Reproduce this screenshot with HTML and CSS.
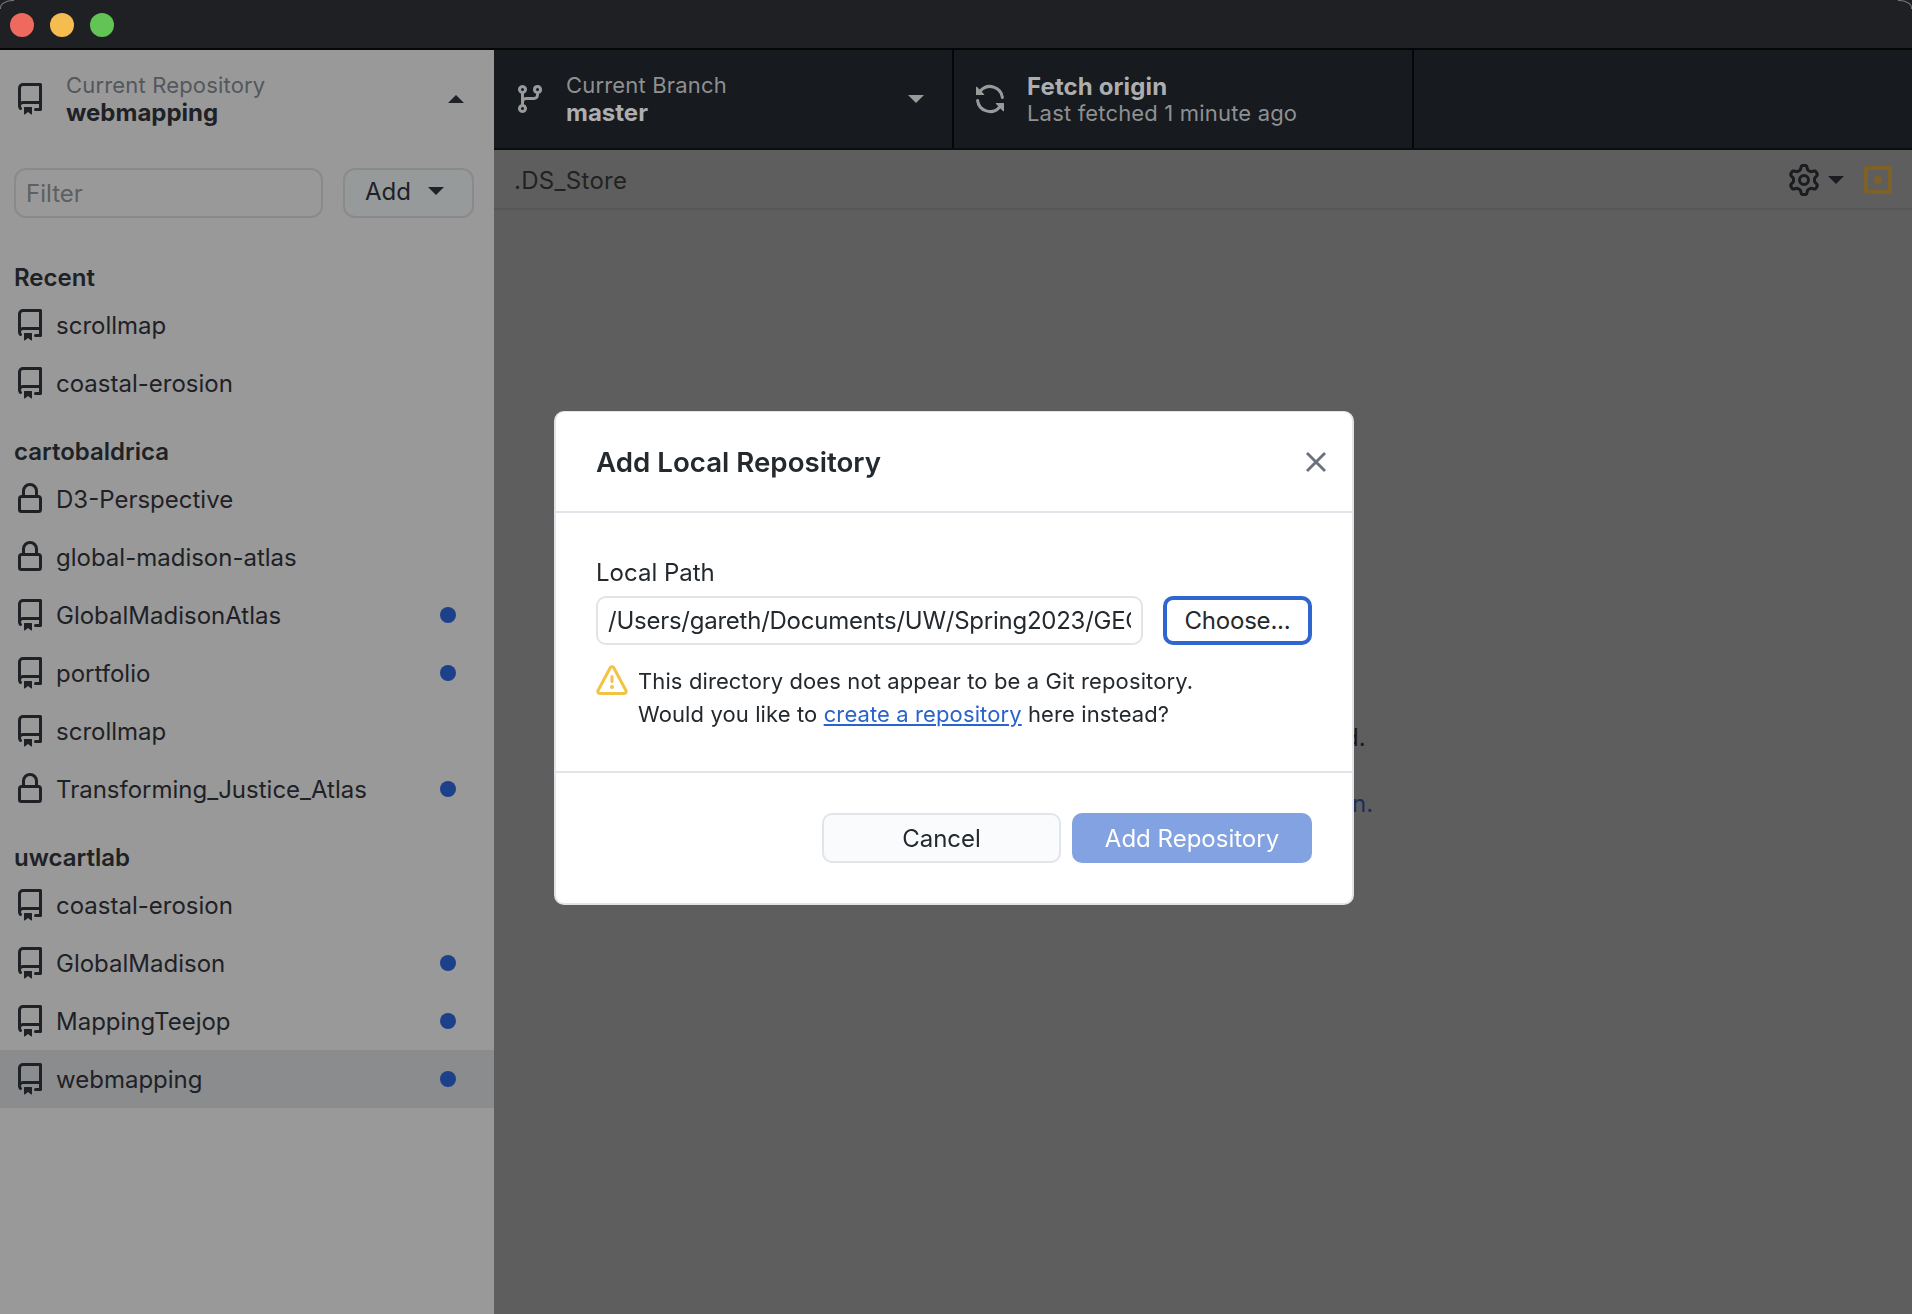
FILE: index.html
```html
<!DOCTYPE html>
<html lang="en">
<head>
    <meta charset="UTF-8">
    <title>GitHub Desktop</title>
    <link rel="stylesheet" href="styles.css">
</head>
<body>
    <svg class="sprites" width="0" height="0">
        <symbol id="repo" viewBox="2 0 12 16">
            <path d="M2 2.5A2.5 2.5 0 0 1 4.5 0h8.75a.75.75 0 0 1 .75.75v12.5a.75.75 0 0 1-.75.75h-2.5a.75.75 0 0 1 0-1.5h1.75v-2h-8a1 1 0 0 0-.714 1.7.75.75 0 1 1-1.072 1.05A2.495 2.495 0 0 1 2 11.5Zm10.5-1h-8a1 1 0 0 0-1 1v6.708A2.486 2.486 0 0 1 4.5 9h8ZM5 12.25a.25.25 0 0 1 .25-.25h3.5a.25.25 0 0 1 .25.25v3.25a.25.25 0 0 1-.4.2l-1.45-1.087a.249.249 0 0 0-.3 0L5.4 15.7a.25.25 0 0 1-.4-.2Z" fill="currentColor"/>
        </symbol>
        <symbol id="lock" viewBox="2 0 12 16">
            <path d="M4 4a4 4 0 0 1 8 0v2h.25c.966 0 1.75.784 1.75 1.75v5.5A1.75 1.75 0 0 1 12.25 15h-8.5A1.75 1.75 0 0 1 2 13.25v-5.5C2 6.784 2.784 6 3.75 6H4Zm8.25 3.5h-8.5a.25.25 0 0 0-.25.25v5.5c0 .138.112.25.25.25h8.5a.25.25 0 0 0 .25-.25v-5.5a.25.25 0 0 0-.25-.25ZM10.5 6V4a2.5 2.5 0 1 0-5 0v2Z" fill="currentColor"/>
        </symbol>
    </svg>

    <div class="titlebar">
        <span class="light light-red"></span>
        <span class="light light-yellow"></span>
        <span class="light light-green"></span>
    </div>

    <div class="app">
        <aside class="sidebar">
            <div class="repo-header">
                <svg class="repo-icon"><use href="#repo"/></svg>
                <div class="repo-header-text">
                    <div class="label">Current Repository</div>
                    <div class="value">webmapping</div>
                </div>
                <span class="caret caret-up"></span>
            </div>

            <div class="filter-row">
                <input class="filter-input" type="text" placeholder="Filter">
                <button class="add-button">Add <span class="caret caret-down"></span></button>
            </div>

            <div class="group-title">Recent</div>
            <div class="repo-row"><svg class="repo-icon"><use href="#repo"/></svg>scrollmap</div>
            <div class="repo-row"><svg class="repo-icon"><use href="#repo"/></svg>coastal-erosion</div>

            <div class="group-title">cartobaldrica</div>
            <div class="repo-row"><svg class="repo-icon"><use href="#lock"/></svg>D3-Perspective</div>
            <div class="repo-row"><svg class="repo-icon"><use href="#lock"/></svg>global-madison-atlas</div>
            <div class="repo-row"><svg class="repo-icon"><use href="#repo"/></svg>GlobalMadisonAtlas<span class="dot"></span></div>
            <div class="repo-row"><svg class="repo-icon"><use href="#repo"/></svg>portfolio<span class="dot"></span></div>
            <div class="repo-row"><svg class="repo-icon"><use href="#repo"/></svg>scrollmap</div>
            <div class="repo-row"><svg class="repo-icon"><use href="#lock"/></svg>Transforming_Justice_Atlas<span class="dot"></span></div>

            <div class="group-title">uwcartlab</div>
            <div class="repo-row"><svg class="repo-icon"><use href="#repo"/></svg>coastal-erosion</div>
            <div class="repo-row"><svg class="repo-icon"><use href="#repo"/></svg>GlobalMadison<span class="dot"></span></div>
            <div class="repo-row"><svg class="repo-icon"><use href="#repo"/></svg>MappingTeejop<span class="dot"></span></div>
            <div class="repo-row repo-row-selected"><svg class="repo-icon"><use href="#repo"/></svg>webmapping<span class="dot"></span></div>
        </aside>

        <main class="main">
            <div class="toolbar">
                <div class="toolbar-item branch-item">
                    <svg class="branch-icon" viewBox="0 0 16 16"><path d="M9.5 3.25a2.25 2.25 0 1 1 3 2.122V6A2.5 2.5 0 0 1 10 8.5H6a1 1 0 0 0-1 1v1.128a2.251 2.251 0 1 1-1.5 0V5.372a2.25 2.25 0 1 1 1.5 0v1.836A2.493 2.493 0 0 1 6 7h4a1 1 0 0 0 1-1v-.628A2.25 2.25 0 0 1 9.5 3.25Zm-6 0a.75.75 0 1 0 1.5 0 .75.75 0 0 0-1.5 0Zm8.25-.75a.75.75 0 1 0 0 1.5.75.75 0 0 0 0-1.5ZM4.25 12a.75.75 0 1 0 0 1.5.75.75 0 0 0 0-1.5Z"/></svg>
                    <div class="toolbar-text">
                        <div class="label">Current Branch</div>
                        <div class="value">master</div>
                    </div>
                    <span class="caret caret-down caret-toolbar"></span>
                </div>
                <div class="toolbar-item fetch-item">
                    <svg class="sync-icon" viewBox="0 0 16 16"><path d="M1.705 8.005a.75.75 0 0 1 .834.656 5.5 5.5 0 0 0 9.592 2.97l-1.204-1.204a.25.25 0 0 1 .177-.427h3.646a.25.25 0 0 1 .25.25v3.646a.25.25 0 0 1-.427.177l-1.38-1.38A7.002 7.002 0 0 1 1.05 8.84a.75.75 0 0 1 .656-.834ZM8 2.5a5.487 5.487 0 0 0-4.131 1.869l1.204 1.204A.25.25 0 0 1 4.896 6H1.25A.25.25 0 0 1 1 5.75V2.104a.25.25 0 0 1 .427-.177l1.38 1.38A7.002 7.002 0 0 1 14.95 7.16a.75.75 0 0 1-1.49.178A5.5 5.5 0 0 0 8 2.5Z"/></svg>
                    <div class="toolbar-text">
                        <div class="value fetch-title">Fetch origin</div>
                        <div class="label">Last fetched 1 minute ago</div>
                    </div>
                </div>
            </div>

            <div class="file-header">
                <span class="file-name">.DS_Store</span>
                <svg class="gear-icon" viewBox="0 0 16 16"><path fill-rule="evenodd" d="M8 0a8.2 8.2 0 0 1 .701.031C9.444.095 9.99.645 10.16 1.29l.288 1.107c.018.066.079.158.212.224.231.114.454.243.668.386.123.082.233.09.299.071l1.103-.303c.644-.176 1.392.021 1.82.63.27.385.506.792.704 1.218.315.675.111 1.422-.364 1.891l-.814.806c-.049.048-.098.147-.088.294.016.257.016.515 0 .772-.01.147.038.246.088.294l.814.806c.475.469.679 1.216.364 1.891a7.977 7.977 0 0 1-.704 1.217c-.428.61-1.176.807-1.82.63l-1.102-.302c-.067-.019-.177-.011-.3.071a5.909 5.909 0 0 1-.668.386c-.133.066-.194.158-.211.224l-.29 1.106c-.168.646-.715 1.196-1.458 1.26a8.006 8.006 0 0 1-1.402 0c-.743-.064-1.289-.614-1.458-1.26l-.289-1.106c-.018-.066-.079-.158-.212-.224a5.738 5.738 0 0 1-.668-.386c-.123-.082-.233-.09-.299-.071l-1.103.303c-.644.176-1.392-.021-1.82-.63a8.12 8.12 0 0 1-.704-1.218c-.315-.675-.111-1.422.363-1.891l.815-.806c.05-.048.098-.147.088-.294a6.214 6.214 0 0 1 0-.772c.01-.147-.038-.246-.088-.294l-.815-.806C.635 6.045.431 5.298.746 4.623a7.92 7.92 0 0 1 .704-1.217c.428-.61 1.176-.807 1.82-.63l1.102.302c.067.019.177.011.3-.071.214-.143.437-.272.668-.386.133-.066.194-.158.211-.224l.29-1.106C6.009.645 6.556.095 7.299.03 7.53.01 7.764 0 8 0Zm-.571 1.525c-.036.003-.108.036-.137.146l-.289 1.105c-.147.561-.549.967-.998 1.189-.173.086-.34.183-.5.29-.417.278-.97.423-1.529.27l-1.103-.303c-.109-.03-.175.016-.195.045-.22.312-.412.644-.573.99-.014.031-.021.11.059.19l.815.806c.411.406.562.957.53 1.456a4.709 4.709 0 0 0 0 .582c.032.499-.119 1.05-.53 1.456l-.815.806c-.081.08-.073.159-.059.19.162.346.353.677.573.989.02.03.085.076.195.046l1.102-.303c.56-.153 1.113-.008 1.53.27.161.107.328.204.501.29.447.222.85.629.997 1.189l.289 1.105c.029.109.101.143.137.146a6.6 6.6 0 0 0 1.142 0c.036-.003.108-.036.137-.146l.289-1.105c.147-.561.549-.967.998-1.189.173-.086.34-.183.5-.29.417-.278.97-.423 1.529-.27l1.103.303c.109.029.175-.016.195-.045.22-.313.411-.644.573-.99.014-.031.021-.11-.059-.19l-.815-.806c-.411-.406-.562-.957-.53-1.456a4.709 4.709 0 0 0 0-.582c-.032-.499.119-1.05.53-1.456l.815-.806c.081-.08.073-.159.059-.19a6.464 6.464 0 0 0-.573-.989c-.02-.03-.085-.076-.195-.046l-1.102.303c-.56.153-1.113.008-1.53-.27a4.44 4.44 0 0 0-.501-.29c-.447-.222-.85-.629-.997-1.189l-.289-1.105c-.029-.11-.101-.143-.137-.146a6.6 6.6 0 0 0-1.142 0ZM11 8a3 3 0 1 1-6 0 3 3 0 0 1 6 0ZM9.5 8a1.5 1.5 0 1 0-3.001.001A1.5 1.5 0 0 0 9.5 8Z"/></svg>
                <span class="caret caret-down caret-gear"></span>
                <span class="status-box"><span class="status-dot"></span></span>
            </div>

            <div class="file-body">
                <p class="behind behind-text">d.</p>
                <p class="behind behind-link">n.</p>
            </div>
        </main>
    </div>

    <div class="dialog-layer">
        <div class="dialog">
            <div class="dialog-header">
                <h1>Add Local Repository</h1>
                <svg class="close-icon" viewBox="0 0 20 20"><path d="M2.5 2.5l15 15M17.5 2.5l-15 15" fill="none" stroke="currentColor" stroke-width="2.4"/></svg>
            </div>
            <div class="dialog-body">
                <div class="field-label">Local Path</div>
                <div class="path-row">
                    <input class="path-input" type="text" value="/Users/gareth/Documents/UW/Spring2023/GEOG575/webmapping">
                    <button class="choose-button">Choose...</button>
                </div>
                <div class="warning">
                    <svg class="warning-icon" viewBox="0 0 16 16"><path fill-rule="evenodd" d="M6.457 1.047c.659-1.234 2.427-1.234 3.086 0l6.082 11.378A1.75 1.75 0 0 1 14.082 15H1.918a1.75 1.75 0 0 1-1.543-2.575Zm1.763.707a.25.25 0 0 0-.44 0L1.698 13.132a.25.25 0 0 0 .22.368h12.164a.25.25 0 0 0 .22-.368Zm.53 3.996v2.5a.75.75 0 0 1-1.5 0v-2.5a.75.75 0 0 1 1.5 0ZM9 11a1 1 0 1 1-2 0 1 1 0 0 1 2 0Z"/></svg>
                    <p>This directory does not appear to be a Git repository.<br>Would you like to <a href="#">create a repository</a> here instead?</p>
                </div>
            </div>
            <div class="dialog-footer">
                <button class="button button-cancel">Cancel</button>
                <button class="button button-primary">Add Repository</button>
            </div>
        </div>
    </div>
</body>
</html>
```

FILE: styles.css
```css
* {
    box-sizing: border-box;
}

html, body {
    margin: 0;
    height: 100%;
    overflow: hidden;
}

body {
    display: flex;
    flex-direction: column;
    background: #5e5e5e;
    font-family: "Inter", "Liberation Sans", sans-serif;
    font-size: 24px;
    color: #1e2126;
}

input, button {
    font: inherit;
    margin: 0;
}

.sprites {
    display: none;
}

.titlebar {
    position: relative;
    display: flex;
    align-items: center;
    gap: 16px;
    flex: none;
    height: 50px;
    padding: 2px 0 0 10px;
    background: #1f2024;
    border-bottom: 2px solid #060606;
}

/* the window's rounded corners catch a thin light edge */
.titlebar::before,
.titlebar::after {
    content: "";
    position: absolute;
    top: 0;
    width: 13px;
    height: 8px;
    border-top: 1px solid #77787a;
}

.titlebar::before {
    left: 0;
    border-left: 1px solid #77787a;
    border-top-left-radius: 13px 8px;
}

.titlebar::after {
    right: 0;
    border-right: 1px solid #77787a;
    border-top-right-radius: 13px 8px;
}

.light {
    width: 24px;
    height: 24px;
    border-radius: 50%;
}

.light-red { background: #ee6a5f; }
.light-yellow { background: #f5bd4f; }
.light-green { background: #61c454; }

.app {
    display: flex;
    flex: 1;
    min-height: 0;
}

/* sidebar */
.sidebar {
    flex: none;
    width: 494px;
    background: #999999;
}

.repo-icon {
    flex: none;
    width: 24px;
    height: 32px;
    color: #1e2126;
}

.repo-header {
    display: flex;
    align-items: center;
    height: 100px;
    padding: 0 30px 2px 18px;
}

.repo-header-text {
    flex: 1;
    margin-left: 24px;
}

.label {
    font-size: 22px;
    line-height: 28px;
    letter-spacing: 0.17px;
    color: #54575c;
}

.value {
    font-size: 24px;
    line-height: 28px;
    font-weight: 700;
    color: #1e2126;
}

.caret {
    display: inline-block;
    width: 0;
    height: 0;
    border-left: 8px solid transparent;
    border-right: 8px solid transparent;
}

.caret-up {
    border-bottom: 8px solid #1e2126;
}

.caret-down {
    border-top: 8px solid #1e2126;
}

.filter-row {
    display: flex;
    gap: 20px;
    height: 50px;
    margin: 18px 20px 20px 14px;
}

.filter-input {
    flex: 1;
    min-width: 0;
    padding: 0 0 0 10px;
    background: transparent;
    border: 2px solid #8a8a8a;
    border-radius: 12px;
    outline: none;
}

.filter-input::placeholder {
    color: #5c5f63;
    opacity: 1;
}

.add-button {
    display: flex;
    align-items: center;
    justify-content: space-between;
    width: 131px;
    padding: 0 28px 4px 20px;
    background: #979a9a;
    border: 2px solid #8a8a8a;
    border-radius: 12px;
    color: #1e2126;
}

.group-title {
    display: flex;
    align-items: flex-end;
    height: 58px;
    padding: 0 0 4px 14px;
    font-weight: 600;
}

.repo-row {
    display: flex;
    align-items: center;
    gap: 14px;
    height: 58px;
    padding: 0 38px 0 18px;
}

.repo-row-selected {
    background: #8b8c8e;
}

.dot {
    width: 16px;
    height: 16px;
    margin-left: auto;
    border-radius: 50%;
    background: #1c408a;
}

/* main */
.main {
    display: flex;
    flex-direction: column;
    flex: 1;
    min-width: 0;
}

.toolbar {
    display: flex;
    flex: none;
    height: 100px;
    background: #171a1e;
    border-bottom: 2px solid #0d0d0e;
}

.toolbar .label {
    color: #8f9092;
}

.toolbar .value {
    color: #adaeaf;
}

.toolbar-item {
    display: flex;
    align-items: center;
    border-right: 2px solid #060606;
}

.branch-item {
    width: 460px;
    padding: 0 28px 0 20px;
}

.fetch-item {
    width: 460px;
    padding: 2px 0 0 20px;
}

.toolbar-text {
    flex: 1;
}

.fetch-title {
    margin-bottom: -2px;
    letter-spacing: 0.12px;
}

.branch-icon {
    width: 32px;
    height: 32px;
    margin-right: 20px;
    fill: #9a9a9b;
}

.sync-icon {
    width: 32px;
    height: 32px;
    margin: 0 21px 2px 0;
    fill: #9a9a9b;
}

.caret-toolbar {
    border-top-color: #9a9a9b;
}

.file-header {
    display: flex;
    align-items: center;
    flex: none;
    height: 60px;
    padding: 2px 20px 0;
    border-bottom: 2px solid #575757;
}

.file-name {
    flex: 1;
    letter-spacing: 0.3px;
    color: #222223;
}

.gear-icon {
    width: 32px;
    height: 32px;
    fill: #1a1c20;
}

.caret-gear {
    margin: 0 20px 0 8px;
    border-top-color: #1a1c20;
}

.status-box {
    display: flex;
    align-items: center;
    justify-content: center;
    width: 28px;
    height: 28px;
    border: 4px solid #7f6126;
    border-radius: 3px;
}

.status-dot {
    width: 8px;
    height: 8px;
    border-radius: 50%;
    background: #7f6126;
}

.file-body {
    position: relative;
    flex: 1;
}

.behind {
    position: absolute;
    margin: 0;
}

.behind-text {
    left: 850px;
    top: 513px;
    color: #1a1a1a;
}

.behind-link {
    left: 858px;
    top: 579px;
    color: #1c2f5c;
}

/* dialog */
.dialog-layer {
    position: fixed;
    inset: 0;
    display: flex;
    align-items: center;
    justify-content: center;
    padding: 1px 4px 0 0;
}

.dialog {
    width: 800px;
    height: 494px;
    background: #ffffff;
    border: 2px solid #e1e4e8;
    border-top-width: 1px;
    border-radius: 10px;
    overflow: hidden;
}

.dialog-header {
    display: flex;
    align-items: center;
    justify-content: space-between;
    height: 101px;
    padding: 2px 24px 0 40px;
    border-bottom: 2px solid #e1e4e8;
}

.dialog-header h1 {
    margin: 0;
    font-size: 27.7px;
    font-weight: 600;
    color: #24292e;
}

.close-icon {
    width: 24px;
    height: 24px;
    color: #6a737d;
}

.dialog-body {
    height: 260px;
    padding: 45px 40px 0;
    border-bottom: 2px solid #e1e4e8;
}

.field-label {
    line-height: 30px;
    color: #24292e;
}

.path-row {
    display: flex;
    gap: 20px;
    margin-top: 8px;
}

.path-input {
    width: 547px;
    height: 49px;
    padding: 0 10px;
    border: 2px solid #e1e4e8;
    border-radius: 10px;
    letter-spacing: -0.25px;
    color: #24292e;
    outline: none;
}

.choose-button {
    width: 149px;
    height: 49px;
    padding: 0;
    background: #ffffff;
    border: 4px solid #2f66d0;
    border-radius: 10px;
    letter-spacing: -0.2px;
    color: #24292e;
}

.warning {
    display: flex;
    gap: 10px;
    margin-top: 20px;
    font-size: 22px;
    line-height: 33px;
    letter-spacing: 0.11px;
    color: #24292e;
}

.warning p {
    margin: 0;
}

.warning a {
    color: #2b63cc;
}

.warning-icon {
    flex: none;
    width: 32px;
    height: 32px;
    fill: #f2c343;
}

.dialog-footer {
    display: flex;
    justify-content: flex-end;
    gap: 11px;
    padding: 40px 40px 0 0;
}

.button {
    height: 50px;
    padding: 2px 0 0;
    border-radius: 10px;
}

.button-cancel {
    width: 239px;
    background: #fafbfc;
    border: 2px solid #e1e4e8;
    color: #24292e;
}

.button-primary {
    width: 240px;
    background: #83a2e2;
    border: none;
    color: #ffffff;
}
```
